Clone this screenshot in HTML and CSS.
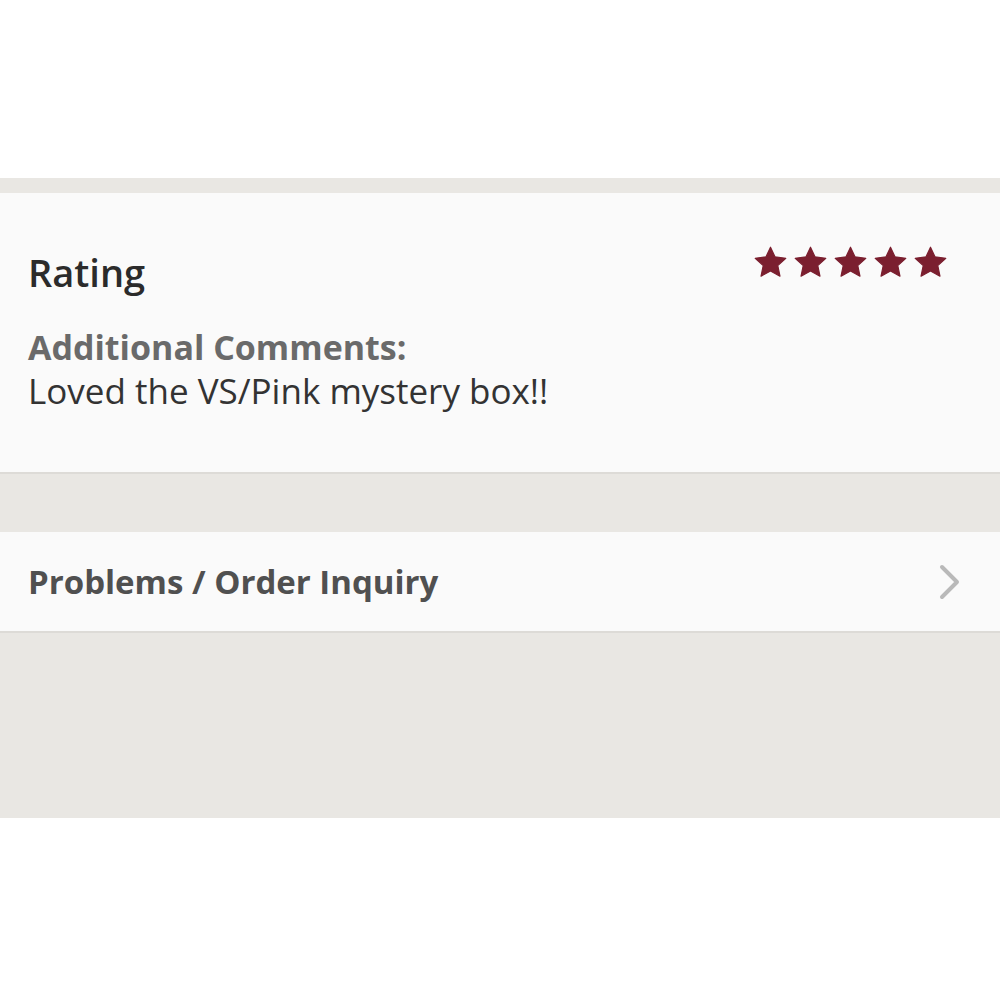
FILE: index.html
```html
<!DOCTYPE html>
<html lang="en">
<head>
  <meta charset="UTF-8">
  <meta name="viewport" content="width=device-width, initial-scale=1.0">
  <title>Order Review</title>
  <link rel="stylesheet" href="styles.css">
</head>
<body>
  <div class="top-space"></div>

  <div class="review-page">
    <div class="review-card">
      <div class="rating-row">
        <h2 class="rating-label">Rating</h2>
        <div class="stars">
          <svg viewBox="0 0 24 24"><path d="M12 1.5L15.1 8.1 22.5 9.1 17 14.1 18.5 21.4 12 17.8 5.5 21.4 7 14.1 1.5 9.1 8.9 8.1z"/></svg>
          <svg viewBox="0 0 24 24"><path d="M12 1.5L15.1 8.1 22.5 9.1 17 14.1 18.5 21.4 12 17.8 5.5 21.4 7 14.1 1.5 9.1 8.9 8.1z"/></svg>
          <svg viewBox="0 0 24 24"><path d="M12 1.5L15.1 8.1 22.5 9.1 17 14.1 18.5 21.4 12 17.8 5.5 21.4 7 14.1 1.5 9.1 8.9 8.1z"/></svg>
          <svg viewBox="0 0 24 24"><path d="M12 1.5L15.1 8.1 22.5 9.1 17 14.1 18.5 21.4 12 17.8 5.5 21.4 7 14.1 1.5 9.1 8.9 8.1z"/></svg>
          <svg viewBox="0 0 24 24"><path d="M12 1.5L15.1 8.1 22.5 9.1 17 14.1 18.5 21.4 12 17.8 5.5 21.4 7 14.1 1.5 9.1 8.9 8.1z"/></svg>
        </div>
      </div>
      <div class="comments-label">Additional Comments:</div>
      <div class="comments-text">Loved the VS/Pink mystery box!!</div>
    </div>

    <a class="menu-row" href="#">
      <span class="menu-title">Problems / Order Inquiry</span>
      <svg class="chevron" viewBox="0 0 24 36"><path d="M4 3l15 15L4 33"/></svg>
    </a>

    <div class="page-fill"></div>
  </div>
</body>
</html>
```

FILE: styles.css
```css
body {
  margin: 0;
  background-color: #fff;
  font-family: "Open Sans", "Noto Sans", Arial, sans-serif;
  color: #2b2b2b;
}
.top-space {
  height: 178px;
}
.review-page {
  background-color: #e9e7e3;
  padding-top: 15px;
}
.review-card {
  background-color: #fafafa;
  border-bottom: 2px solid #dddbd7;
  padding: 57px 52px 59px 28px;
}
.rating-row {
  display: flex;
  justify-content: space-between;
  align-items: flex-start;
}
.rating-label {
  margin: 0;
  font-size: 38px;
  line-height: 44px;
  font-weight: 600;
  color: #2b2b2b;
}
.stars {
  display: flex;
  gap: 5px;
  margin-top: -5px;
}
.stars svg {
  width: 35px;
  height: 35px;
  fill: #7b1f2f;
  stroke: #7b1f2f;
  stroke-width: 0.8;
  stroke-linejoin: round;
}
.comments-label {
  font-size: 34px;
  line-height: 44px;
  font-weight: bold;
  color: #6a6a6a;
  margin-top: 31px;
}
.comments-text {
  font-size: 35px;
  line-height: 44px;
  color: #333;
}
.menu-row {
  display: flex;
  justify-content: space-between;
  align-items: center;
  margin-top: 58px;
  height: 99px;
  padding: 0 38px 0 28px;
  background-color: #fafafa;
  border-bottom: 2px solid #dddbd7;
  text-decoration: none;
}
.menu-title {
  font-size: 33px;
  font-weight: bold;
  color: #505050;
}
.chevron {
  width: 24px;
  height: 36px;
  fill: none;
  stroke: #b9b9b9;
  stroke-width: 4;
  stroke-linecap: round;
  stroke-linejoin: round;
}
.page-fill {
  height: 185px;
}
```
